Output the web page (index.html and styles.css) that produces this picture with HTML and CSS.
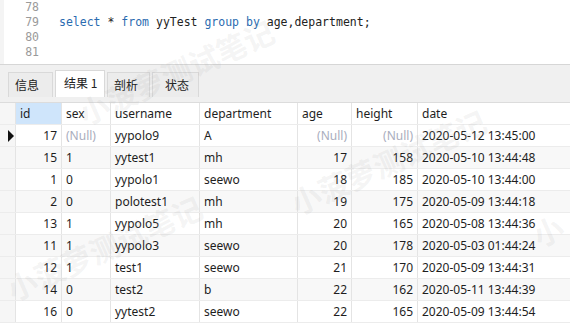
FILE: index.html
```html
<!DOCTYPE html>
<html lang="zh-CN">
<head>
    <meta charset="UTF-8">
    <title>查询结果</title>
    <link rel="stylesheet" href="styles.css">
</head>
<body>
    <!-- SQL editor -->
    <div class="editor">
        <div class="line"><span class="num">78</span><span class="code"></span></div>
        <div class="line"><span class="num">79</span><span class="code"><span class="kw">select</span> * <span class="kw">from</span> yyTest <span class="kw">group by</span> age,department;</span></div>
        <div class="line"><span class="num">80</span><span class="code"></span></div>
        <div class="line"><span class="num">81</span><span class="code"></span></div>
    </div>

    <!-- Result tabs -->
    <div class="tabbar">
        <div class="tab t-info">信息</div>
        <div class="tab t-res active">结果 1</div>
        <div class="tab t-prof">剖析</div>
        <div class="tab t-stat">状态</div>
    </div>

    <!-- Result grid -->
    <div class="grid">
        <div class="row head">
            <div class="cell ind"></div>
            <div class="cell c-id sel">id</div>
            <div class="cell c-sex">sex</div>
            <div class="cell c-user">username</div>
            <div class="cell c-dep">department</div>
            <div class="cell c-age">age</div>
            <div class="cell c-h">height</div>
            <div class="cell c-date">date</div>
        </div>
        <div class="row">
            <div class="cell ind"><span class="arrow"></span></div>
            <div class="cell c-id num">17</div>
            <div class="cell c-sex null">(Null)</div>
            <div class="cell c-user">yypolo9</div>
            <div class="cell c-dep">A</div>
            <div class="cell c-age num null">(Null)</div>
            <div class="cell c-h num null">(Null)</div>
            <div class="cell c-date">2020-05-12 13:45:00</div>
        </div>
        <div class="row">
            <div class="cell ind"></div>
            <div class="cell c-id num">15</div>
            <div class="cell c-sex">1</div>
            <div class="cell c-user">yytest1</div>
            <div class="cell c-dep">mh</div>
            <div class="cell c-age num">17</div>
            <div class="cell c-h num">158</div>
            <div class="cell c-date">2020-05-10 13:44:48</div>
        </div>
        <div class="row">
            <div class="cell ind"></div>
            <div class="cell c-id num">1</div>
            <div class="cell c-sex">0</div>
            <div class="cell c-user">yypolo1</div>
            <div class="cell c-dep">seewo</div>
            <div class="cell c-age num">18</div>
            <div class="cell c-h num">185</div>
            <div class="cell c-date">2020-05-10 13:44:00</div>
        </div>
        <div class="row">
            <div class="cell ind"></div>
            <div class="cell c-id num">2</div>
            <div class="cell c-sex">0</div>
            <div class="cell c-user">polotest1</div>
            <div class="cell c-dep">mh</div>
            <div class="cell c-age num">19</div>
            <div class="cell c-h num">175</div>
            <div class="cell c-date">2020-05-09 13:44:18</div>
        </div>
        <div class="row">
            <div class="cell ind"></div>
            <div class="cell c-id num">13</div>
            <div class="cell c-sex">1</div>
            <div class="cell c-user">yypolo5</div>
            <div class="cell c-dep">mh</div>
            <div class="cell c-age num">20</div>
            <div class="cell c-h num">165</div>
            <div class="cell c-date">2020-05-08 13:44:36</div>
        </div>
        <div class="row">
            <div class="cell ind"></div>
            <div class="cell c-id num">11</div>
            <div class="cell c-sex">1</div>
            <div class="cell c-user">yypolo3</div>
            <div class="cell c-dep">seewo</div>
            <div class="cell c-age num">20</div>
            <div class="cell c-h num">178</div>
            <div class="cell c-date">2020-05-03 01:44:24</div>
        </div>
        <div class="row">
            <div class="cell ind"></div>
            <div class="cell c-id num">12</div>
            <div class="cell c-sex">1</div>
            <div class="cell c-user">test1</div>
            <div class="cell c-dep">seewo</div>
            <div class="cell c-age num">21</div>
            <div class="cell c-h num">170</div>
            <div class="cell c-date">2020-05-09 13:44:31</div>
        </div>
        <div class="row">
            <div class="cell ind"></div>
            <div class="cell c-id num">14</div>
            <div class="cell c-sex">0</div>
            <div class="cell c-user">test2</div>
            <div class="cell c-dep">b</div>
            <div class="cell c-age num">22</div>
            <div class="cell c-h num">162</div>
            <div class="cell c-date">2020-05-11 13:44:39</div>
        </div>
        <div class="row">
            <div class="cell ind"></div>
            <div class="cell c-id num">16</div>
            <div class="cell c-sex">0</div>
            <div class="cell c-user">yytest2</div>
            <div class="cell c-dep">seewo</div>
            <div class="cell c-age num">22</div>
            <div class="cell c-h num">165</div>
            <div class="cell c-date">2020-05-09 13:44:54</div>
        </div>
    </div>

    <!-- Watermarks laid over the page -->
    <div class="wm wm-top">小菠萝测试笔记</div>
    <div class="wm wm-mid">小菠萝测试笔记</div>
    <div class="wm wm-low">小菠萝测试笔记</div>
    <div class="wm wm-right">小</div>
</body>
</html>
```

FILE: styles.css
```css
* {
    margin: 0;
    padding: 0;
    box-sizing: border-box;
}

body {
    width: 570px;
    height: 329px;
    overflow: hidden;
    position: relative;
    background: #fff;
    font-family: "Noto Sans", "Noto Sans CJK SC", sans-serif;
    font-size: 12px;
    color: #1e1e1e;
}

/* Editor */
.editor {
    height: 65px;
    border-bottom: 1px solid #d6d6d6;
    background: linear-gradient(to right, #f4f4f4 0, #f4f4f4 4px, #fff 4px);
}

.line {
    display: flex;
    height: 15px;
    line-height: 15px;
    font-family: "DejaVu Sans Mono", monospace;
    font-size: 11.5px;
}

.line .num {
    width: 40px;
    text-align: right;
    color: #9a9a9a;
    padding-right: 1px;
}

.line .code {
    padding-left: 19px;
    color: #222;
    white-space: pre;
}

.kw {
    color: #2a6bb0;
}

/* Tabs */
.tabbar {
    display: flex;
    align-items: flex-end;
    gap: 2px;
    height: 38px;
    padding: 0 0 5px 8px;
    background: #f0f0f0;
    border-bottom: 1px solid #dcdcdc;
}

.tab {
    height: 25px;
    line-height: 24px;
    padding: 0 6px;
    font-family: "Noto Sans CJK SC", sans-serif;
    font-size: 12px;
    color: #222;
    white-space: nowrap;
    background: #ececec;
    border: 1px solid #d9d9d9;
    border-bottom: none;
}

.tab.active {
    height: 27px;
    background: #fff;
}

.t-info { width: 45px; }
.t-res { width: 50px; padding-left: 8px; }
.t-prof { width: 43px; }
.t-stat { width: 47px; padding-left: 12px; }

/* Grid */
.grid {
    display: flex;
    flex-direction: column;
}

.row {
    display: flex;
    height: 22px;
    border-bottom: 1px solid #ececec;
}

.row:nth-child(odd):not(.head) {
    background: #f8f8f8;
}

.cell {
    line-height: 21px;
    padding: 0 4px;
    border-right: 1px solid #e4e4e4;
    white-space: nowrap;
    overflow: hidden;
}

.cell.num {
    text-align: right;
}

.cell.null {
    color: #a9adbd;
}

.ind {
    width: 16px;
    background: #f6f6f6;
    position: relative;
}

.sel {
    background: #cfe5fb;
}

.arrow {
    position: absolute;
    left: 8px;
    top: 5px;
    border-left: 6px solid #111;
    border-top: 6px solid transparent;
    border-bottom: 6px solid transparent;
}

.c-id { width: 46px; }
.c-sex { width: 49px; }
.c-user { width: 89px; }
.c-dep { width: 98px; }
.c-age { width: 54px; }
.c-h { width: 66px; }
.c-date { flex: 1; border-right: none; }

/* Watermarks */
.wm {
    position: absolute;
    font-family: "Noto Sans CJK SC", sans-serif;
    font-weight: bold;
    font-size: 30px;
    color: rgba(150, 150, 150, 0.11);
    white-space: nowrap;
    transform-origin: left center;
    transform: rotate(-24deg);
    pointer-events: none;
}

.wm-top { left: 80px; top: 92px; }
.wm-mid { left: 292px; top: 182px; }
.wm-low { left: 8px; top: 268px; }
.wm-right { left: 534px; top: 214px; }
```
